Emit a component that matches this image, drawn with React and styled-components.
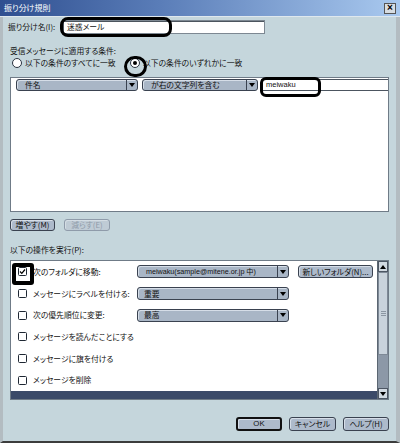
import React from "react";
import styled, { createGlobalStyle, css } from "styled-components";

const Global = createGlobalStyle`
  html, body { margin: 0; padding: 0; }
  body { width: 400px; height: 443px; overflow: hidden; background: #c5d6dc; }
  * { box-sizing: border-box; }
`;

const FONT = `"Noto Sans CJK JP", "Liberation Sans", sans-serif`;
const LATIN = `"Liberation Sans", "Noto Sans CJK JP", sans-serif`;

const Frame = styled.div`
  position: relative;
  width: 400px;
  height: 443px;
  display: flex;
  flex-direction: column;
  background: #c5d6dc;
  font-family: ${FONT};
  font-size: 7.8px;
  font-feature-settings: "palt";
  color: #111;
  line-height: 1;
  overflow: hidden;
`;

const TitleBar = styled.div`
  height: 17px;
  flex: none;
  display: flex;
  align-items: center;
  justify-content: space-between;
  padding: 0 4px 0 4px;
  background: linear-gradient(90deg, #2f4f90 0%, #5a7db8 40%, #a9c9ef 100%);
  color: #fff;
  font-size: 8px;
  border-bottom: 1px solid #dfe8ee;
`;

const CloseBtn = styled.div`
  width: 12px;
  height: 11px;
  background: #d7dde2;
  border: 1px solid #555;
  display: flex;
  align-items: center;
  justify-content: center;
  color: #000;
  font-family: "Liberation Sans", sans-serif;
  font-size: 10px;
  font-weight: bold;
`;

const Body = styled.div`
  flex: 1;
  display: flex;
  flex-direction: column;
  border-left: 3px solid #b3bcc1;
  border-right: 4px solid #b3bcc1;
  border-bottom: 2px solid #3c3c3c;
  padding: 0 7px 0 7px;
`;

const NameRow = styled.div`
  display: flex;
  align-items: center;
  margin-top: 3px;
  margin-left: -2px;
  height: 14px;
`;

const FieldLabel = styled.span`
  width: ${(p) => p.$w}px;
  flex: none;
  white-space: nowrap;
`;

const TextInput = styled.div`
  width: ${(p) => p.$w}px;
  height: 14px;
  background: #fff;
  border: 1px solid #7d8892;
  box-shadow: inset 1px 1px 0 #4c555e;
  display: flex;
  align-items: center;
  padding-left: 4px;
`;

const SectionLabel = styled.div`
  margin-top: ${(p) => p.$mt}px;
  height: 12px;
  display: flex;
  align-items: center;
  white-space: nowrap;
`;

const RadioRow = styled.div`
  display: flex;
  align-items: center;
  height: 12px;
  margin-left: 2px;
`;

const RadioOption = styled.div`
  display: flex;
  align-items: center;
  gap: 3px;
  width: ${(p) => (p.$w ? `${p.$w}px` : "auto")};
  white-space: nowrap;
`;

const Radio = styled.span`
  width: 10px;
  height: 10px;
  flex: none;
  border-radius: 50%;
  border: 1px solid #2a3340;
  background: #fff;
  display: flex;
  align-items: center;
  justify-content: center;
  &::after {
    content: "";
    display: ${(p) => (p.$on ? "block" : "none")};
    width: 4px;
    height: 4px;
    border-radius: 50%;
    background: #000;
  }
`;

const CondList = styled.div`
  margin-top: 8px;
  height: 135px;
  background: #fff;
  border: 1px solid #6f7b87;
  padding: 1px 0 0 5px;
`;

const CondRow = styled.div`
  display: flex;
  align-items: center;
  height: 12px;
`;

const selectBase = css`
  height: ${(p) => p.$h || 12}px;
  width: ${(p) => p.$w}px;
  flex: none;
  display: flex;
  align-items: stretch;
  border: 1px solid #3a4250;
  border-radius: 3px;
  background: #a9b6c6;
  box-shadow: inset 1px 1px 0 #d6dee8;
  overflow: hidden;
`;

const Select = styled.div`
  ${selectBase}
  margin-right: ${(p) => p.$mr || 0}px;
`;

const SelectText = styled.span`
  flex: 1;
  display: flex;
  align-items: center;
  padding-left: ${(p) => p.$pl || 8}px;
  white-space: nowrap;
  overflow: hidden;
  font-family: ${(p) => (p.$latin ? LATIN : "inherit")};
  font-size: ${(p) => (p.$latin ? "7.2px" : "inherit")};
`;

const SelectArrow = styled.span`
  width: 11px;
  flex: none;
  border-left: 1px solid #3a4250;
  display: flex;
  align-items: center;
  justify-content: center;
  &::after {
    content: "";
    width: 0;
    height: 0;
    border-left: 3.5px solid transparent;
    border-right: 3.5px solid transparent;
    border-top: 4px solid #000;
  }
`;

const ValueField = styled.div`
  flex: 1;
  height: 12px;
  border: 1px solid #4c5560;
  border-right: none;
  display: flex;
  align-items: center;
  padding-left: 4px;
  font-family: ${LATIN};
  font-size: 7.5px;
`;

const ButtonRow = styled.div`
  display: flex;
  gap: ${(p) => p.$gap}px;
  margin-top: ${(p) => p.$mt}px;
  justify-content: ${(p) => (p.$end ? "flex-end" : "flex-start")};
`;

const Button = styled.div`
  width: ${(p) => p.$w}px;
  height: ${(p) => p.$h || 12}px;
  flex: none;
  display: flex;
  align-items: center;
  justify-content: center;
  border-radius: 3px;
  white-space: nowrap;
  overflow: hidden;
  background: ${(p) => (p.$disabled ? "#bfcbd5" : "#adbacb")};
  border: ${(p) => (p.$default ? "2px solid #111" : p.$disabled ? "1px solid #8f9baa" : "1px solid #3a4250")};
  color: ${(p) => (p.$disabled ? "#8f9baa" : "#111")};
  box-shadow: inset 1px 1px 0 ${(p) => (p.$disabled ? "#d4dde4" : "#d6dee8")};
  margin-left: ${(p) => p.$ml || 0}px;
  font-family: ${(p) => (p.$latin ? LATIN : "inherit")};
`;

const ActionList = styled.div`
  margin-top: 4px;
  height: 140px;
  background: #fff;
  border: 1px solid #6f7b87;
  display: flex;
`;

const Rows = styled.div`
  flex: 1;
  display: flex;
  flex-direction: column;
`;

const ActionRow = styled.div`
  height: 21.7px;
  flex: none;
  display: flex;
  align-items: center;
  padding-left: 7px;
`;

const Check = styled.span`
  width: 9px;
  height: 9px;
  flex: none;
  border: 1px solid #1e2733;
  border-radius: 1.5px;
  background: #fff;
  margin-right: 6px;
  display: flex;
  align-items: center;
  justify-content: center;
`;

const ActionLabel = styled.span`
  width: 104px;
  flex: none;
  white-space: nowrap;
`;

const DarkBar = styled.div`
  flex: 1;
  background: #3b4a68;
`;

const ScrollBar = styled.div`
  width: 11px;
  flex: none;
  display: flex;
  flex-direction: column;
  border-left: 1px solid #5b6672;
`;

const ScrollBtn = styled.div`
  height: 11px;
  flex: none;
  background: #d2dae2;
  border: 1px solid #4c5663;
  display: flex;
  align-items: center;
  justify-content: center;
  &::after {
    content: "";
    border-left: 3px solid transparent;
    border-right: 3px solid transparent;
    ${(p) => (p.$up ? "border-bottom: 4px solid #000;" : "border-top: 4px solid #000;")}
  }
`;

const Thumb = styled.div`
  height: 83px;
  flex: none;
  background: #c9d3dc;
  border: 1px solid #7e8996;
  display: flex;
  align-items: center;
  justify-content: center;
`;

const Grip = styled.div`
  width: 5px;
  height: 5px;
  border-top: 1px solid #8b96a2;
  border-bottom: 1px solid #8b96a2;
  position: relative;
  &::after {
    content: "";
    position: absolute;
    left: 0;
    right: 0;
    top: 1px;
    border-top: 1px solid #8b96a2;
  }
`;

const Track = styled.div`
  flex: 1;
  background: #8c98a7;
`;

const Mark = styled.div`
  position: absolute;
  left: ${(p) => p.$x}px;
  top: ${(p) => p.$y}px;
  width: ${(p) => p.$w}px;
  height: ${(p) => p.$h}px;
  border: ${(p) => p.$b || 3}px solid #000;
  border-radius: ${(p) => p.$r}px;
  pointer-events: none;
`;

const CheckMark = () => (
  <svg width="7" height="7" viewBox="0 0 7 7">
    <path d="M1 3.5 L2.8 5.3 L6 1.5" fill="none" stroke="#000" strokeWidth="1.2" />
  </svg>
);

const actions = [
  { label: "次のフォルダに移動:", checked: true, select: "meiwaku(sample@mitene.or.jp 中)", latin: true, button: true },
  { label: "メッセージにラベルを付ける:", select: "重要" },
  { label: "次の優先順位に変更:", select: "最高" },
  { label: "メッセージを読んだことにする" },
  { label: "メッセージに旗を付ける" },
  { label: "メッセージを削除" },
];

export default function App() {
  return (
    <>
      <Global />
      <Frame>
        <TitleBar>
          <span>振り分け規則</span>
          <CloseBtn>×</CloseBtn>
        </TitleBar>
        <Body>
          <NameRow>
            <FieldLabel $w={54}>振り分け名(I):</FieldLabel>
            <TextInput $w={203}>迷惑メール</TextInput>
          </NameRow>
          <SectionLabel $mt={11}>受信メッセージに適用する条件:</SectionLabel>
          <RadioRow>
            <RadioOption $w={118}>
              <Radio />
              <span>以下の条件のすべてに一致</span>
            </RadioOption>
            <RadioOption>
              <Radio $on />
              <span>以下の条件のいずれかに一致</span>
            </RadioOption>
          </RadioRow>
          <CondList>
            <CondRow>
              <Select $w={122} $mr={4}>
                <SelectText>件名</SelectText>
                <SelectArrow />
              </Select>
              <Select $w={116} $mr={3}>
                <SelectText>が右の文字列を含む</SelectText>
                <SelectArrow />
              </Select>
              <ValueField>meiwaku</ValueField>
            </CondRow>
          </CondList>
          <ButtonRow $gap={9} $mt={7}>
            <Button $w={45}>増やす(M)</Button>
            <Button $w={46} $disabled>減らす(E)</Button>
          </ButtonRow>
          <SectionLabel $mt={13}>以下の操作を実行(P):</SectionLabel>
          <ActionList>
            <Rows>
              {actions.map((a) => (
                <ActionRow key={a.label}>
                  <Check>{a.checked && <CheckMark />}</Check>
                  <ActionLabel>{a.label}</ActionLabel>
                  {a.select && (
                    <Select $w={152} $h={13}>
                      <SelectText $pl={a.latin ? 8 : 6} $latin={a.latin}>{a.select}</SelectText>
                      <SelectArrow />
                    </Select>
                  )}
                  {a.button && (
                    <Button $w={75} $h={13} $ml={9}>新しいフォルダ(N)...</Button>
                  )}
                </ActionRow>
              ))}
              <DarkBar />
            </Rows>
            <ScrollBar>
              <ScrollBtn $up />
              <Thumb>
                <Grip />
              </Thumb>
              <Track />
              <ScrollBtn />
            </ScrollBar>
          </ActionList>
          <ButtonRow $gap={7} $mt={17} $end>
            <Button $w={46} $h={14} $default $latin>OK</Button>
            <Button $w={47} $h={14}>キャンセル</Button>
            <Button $w={46} $h={14}>ヘルプ(H)</Button>
          </ButtonRow>
        </Body>
        <Mark $x={60} $y={17} $w={112} $h={20} $r={8} />
        <Mark $x={124} $y={56} $w={23} $h={21} $r={12} />
        <Mark $x={260} $y={77} $w={61} $h={20} $r={6} />
        <Mark $x={12} $y={263} $w={22} $h={22} $r={3} $b={4} />
      </Frame>
    </>
  );
}
